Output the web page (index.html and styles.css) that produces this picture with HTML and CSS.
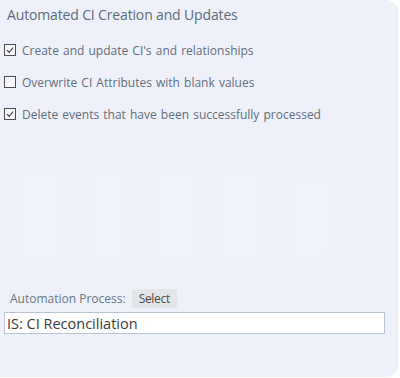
FILE: index.html
```html
<!DOCTYPE html>
<html lang="en">
<head>
    <meta charset="UTF-8">
    <title>Automated CI Creation and Updates</title>
    <link rel="stylesheet" href="styles.css">
</head>
<body>
    <div class="panel">
        <div class="panel-title">Automated CI Creation and Updates</div>

        <div class="option-list">
            <label class="option">
                <span class="check checked">
                    <svg viewBox="0 0 12 12" width="12" height="12"><path d="M2.5 6.2 L5 8.8 L9.8 3" fill="none" stroke="#3c3c3c" stroke-width="1.4"/></svg>
                </span>
                Create and update CI's and relationships
            </label>
            <label class="option">
                <span class="check"></span>
                Overwrite CI Attributes with blank values
            </label>
            <label class="option">
                <span class="check checked">
                    <svg viewBox="0 0 12 12" width="12" height="12"><path d="M2.5 6.2 L5 8.8 L9.8 3" fill="none" stroke="#3c3c3c" stroke-width="1.4"/></svg>
                </span>
                Delete events that have been successfully processed
            </label>
        </div>

        <!-- faded placeholder bars behind the form -->
        <div class="ghost-bars">
            <div class="ghost-bar"></div>
            <div class="ghost-bar"></div>
            <div class="ghost-bar"></div>
            <div class="ghost-bar"></div>
            <div class="ghost-bar short"></div>
        </div>

        <div class="process-row">
            <span class="process-label">Automation Process:</span>
            <button class="select-button">Select</button>
        </div>
        <input class="process-input" type="text" value="IS: CI Reconciliation">
    </div>
</body>
</html>
```

FILE: styles.css
```css
body {
    margin: 0;
    background-color: #ffffff;
    font-family: 'Open Sans', 'Liberation Sans', sans-serif;
}

.panel {
    width: 398px;
    height: 377px;
    box-sizing: border-box;
    padding: 6px 0 0 4px;
    background-color: #eef1f9;
    border-radius: 0 12px 12px 0;
    display: flex;
    flex-direction: column;
}

.panel-title {
    font-size: 14px;
    line-height: 18px;
    color: #5d6b79;
    padding-left: 3px;
    letter-spacing: -0.15px;
}

.option-list {
    margin-top: 10px;
    display: flex;
    flex-direction: column;
}

.option {
    height: 32px;
    display: flex;
    align-items: center;
    gap: 6px;
    font-size: 12px;
    color: #5f6d7b;
    word-spacing: 1px;
}

.check {
    width: 12px;
    height: 12px;
    box-sizing: border-box;
    border: 1px solid #4f4f4f;
    background-color: #f7f8fb;
    display: flex;
    align-items: center;
    justify-content: center;
}

.check svg {
    display: block;
}

.ghost-bars {
    margin-top: 45px;
    margin-left: 20px;
    height: 80px;
    display: flex;
    align-items: flex-end;
    gap: 33px;
}

.ghost-bar {
    width: 34px;
    height: 80px;
    background-color: #f0f2fb;
}

.ghost-bar.short {
    height: 73px;
}

.process-row {
    margin-top: 34px;
    padding-left: 6px;
    display: flex;
    align-items: center;
    gap: 6px;
}

.process-label {
    font-size: 12px;
    color: #667585;
}

.select-button {
    height: 19px;
    padding: 0 7px;
    border: none;
    background-color: #e3e5e9;
    color: #4a4a4a;
    font-family: 'Open Sans', 'Liberation Sans', sans-serif;
    font-size: 12px;
    letter-spacing: -0.3px;
}

.process-input {
    margin-top: 4px;
    width: 381px;
    height: 22px;
    box-sizing: border-box;
    padding: 0 2px;
    border: 1.5px solid #b8c4d0;
    background-color: #ffffff;
    font-family: 'Open Sans', 'Liberation Sans', sans-serif;
    font-size: 14.5px;
    color: #3a3a3a;
}
```
